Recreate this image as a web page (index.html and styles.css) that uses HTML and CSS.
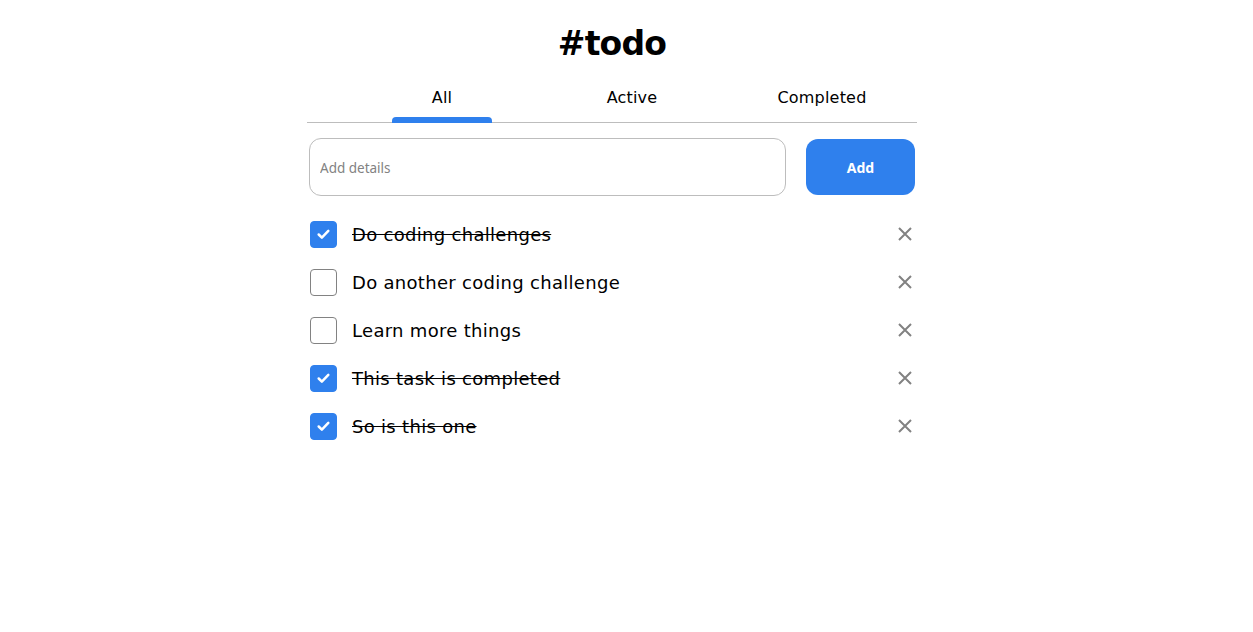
FILE: index.html
```html
<!DOCTYPE html>
<html lang="en">
<head>
<meta charset="utf-8">
<title>#todo</title>
<link rel="stylesheet" href="styles.css">
</head>
<body>
<div class="app">
  <h1 class="title">#todo</h1>
  <nav class="tabs">
    <div class="tab tab-active">All</div>
    <div class="tab">Active</div>
    <div class="tab">Completed</div>
  </nav>
  <form class="add-form">
    <input class="add-input" type="text" placeholder="Add details">
    <button class="add-btn" type="button">Add</button>
  </form>
  <ul class="list">
    <li class="item done">
      <span class="box"><svg viewBox="0 0 26 26" width="26" height="26"><path d="M8 13.5l3.3 3.2L18 9.8" fill="none" stroke="#fff" stroke-width="2.6" stroke-linecap="round" stroke-linejoin="round"/></svg></span>
      <span class="label">Do coding challenges</span>
      <span class="del"><svg viewBox="0 0 16 16" width="16" height="16"><path d="M2 2L14 14M14 2L2 14" stroke="#828282" stroke-width="2" fill="none"/></svg></span>
    </li>
    <li class="item">
      <span class="box"></span>
      <span class="label">Do another coding challenge</span>
      <span class="del"><svg viewBox="0 0 16 16" width="16" height="16"><path d="M2 2L14 14M14 2L2 14" stroke="#828282" stroke-width="2" fill="none"/></svg></span>
    </li>
    <li class="item">
      <span class="box"></span>
      <span class="label">Learn more things</span>
      <span class="del"><svg viewBox="0 0 16 16" width="16" height="16"><path d="M2 2L14 14M14 2L2 14" stroke="#828282" stroke-width="2" fill="none"/></svg></span>
    </li>
    <li class="item done">
      <span class="box"><svg viewBox="0 0 26 26" width="26" height="26"><path d="M8 13.5l3.3 3.2L18 9.8" fill="none" stroke="#fff" stroke-width="2.6" stroke-linecap="round" stroke-linejoin="round"/></svg></span>
      <span class="label">This task is completed</span>
      <span class="del"><svg viewBox="0 0 16 16" width="16" height="16"><path d="M2 2L14 14M14 2L2 14" stroke="#828282" stroke-width="2" fill="none"/></svg></span>
    </li>
    <li class="item done">
      <span class="box"><svg viewBox="0 0 26 26" width="26" height="26"><path d="M8 13.5l3.3 3.2L18 9.8" fill="none" stroke="#fff" stroke-width="2.6" stroke-linecap="round" stroke-linejoin="round"/></svg></span>
      <span class="label">So is this one</span>
      <span class="del"><svg viewBox="0 0 16 16" width="16" height="16"><path d="M2 2L14 14M14 2L2 14" stroke="#828282" stroke-width="2" fill="none"/></svg></span>
    </li>
  </ul>
</div>
</body>
</html>
```
FILE: styles.css
```css
* { box-sizing: border-box; }
body {
  margin: 0;
  padding-right: 29px;
  background: #fff;
  font-family: "DejaVu Sans", "Noto Sans", sans-serif;
  color: #000;
}
.app {
  width: 610px;
  margin: 0 auto;
}
.title {
  margin: 0;
  padding-top: 24px;
  height: 80px;
  font-size: 33px;
  line-height: 40px;
  font-weight: bold;
  text-align: center;
  letter-spacing: -0.8px;
}
.tabs {
  display: grid;
  grid-template-columns: repeat(3, 1fr);
  padding-left: 40px;
  border-bottom: 1px solid #bdbdbd;
}
.tab {
  position: relative;
  height: 42px;
  padding-top: 7px;
  text-align: center;
  font-size: 16px;
  line-height: 21px;
  letter-spacing: 0.2px;
}
.tab-active::after {
  content: "";
  position: absolute;
  left: 45px;
  right: 45px;
  bottom: -1px;
  height: 6px;
  background: #2f80ed;
  border-radius: 4px 4px 0 0;
}
.add-form {
  display: flex;
  align-items: center;
  gap: 20px;
  margin: 15px 2px 0 2px;
}
.add-input {
  flex: 1;
  height: 58px;
  border: 1px solid #bdbdbd;
  border-radius: 12px;
  padding: 1px 10px 0 10px;
  font-family: "Noto Sans", sans-serif;
  font-size: 13.5px;
  outline: none;
}
.add-input::placeholder { color: #828282; }
.add-btn {
  width: 109px;
  height: 56px;
  border: none;
  border-radius: 12px;
  background: #2f80ed;
  color: #fff;
  font-family: "Noto Sans", sans-serif;
  font-weight: bold;
  font-size: 14px;
}
.list {
  list-style: none;
  margin: 14px 0 0 0;
  padding: 0;
}
.item {
  display: flex;
  align-items: center;
  height: 48px;
  padding: 0 3px 0 3px;
}
.box {
  width: 27px;
  height: 27px;
  border: 1px solid #828282;
  border-radius: 4px;
  flex: none;
  display: flex;
  align-items: center;
  justify-content: center;
}
.done .box {
  background: #2f80ed;
  border-color: #2f80ed;
}
.label {
  flex: 1;
  margin-left: 15px;
  font-size: 18px;
  letter-spacing: 0.3px;
}
.done .label {
  text-decoration: line-through;
}
.del {
  width: 16px;
  height: 16px;
  margin-right: 1px;
  display: flex;
}
```
